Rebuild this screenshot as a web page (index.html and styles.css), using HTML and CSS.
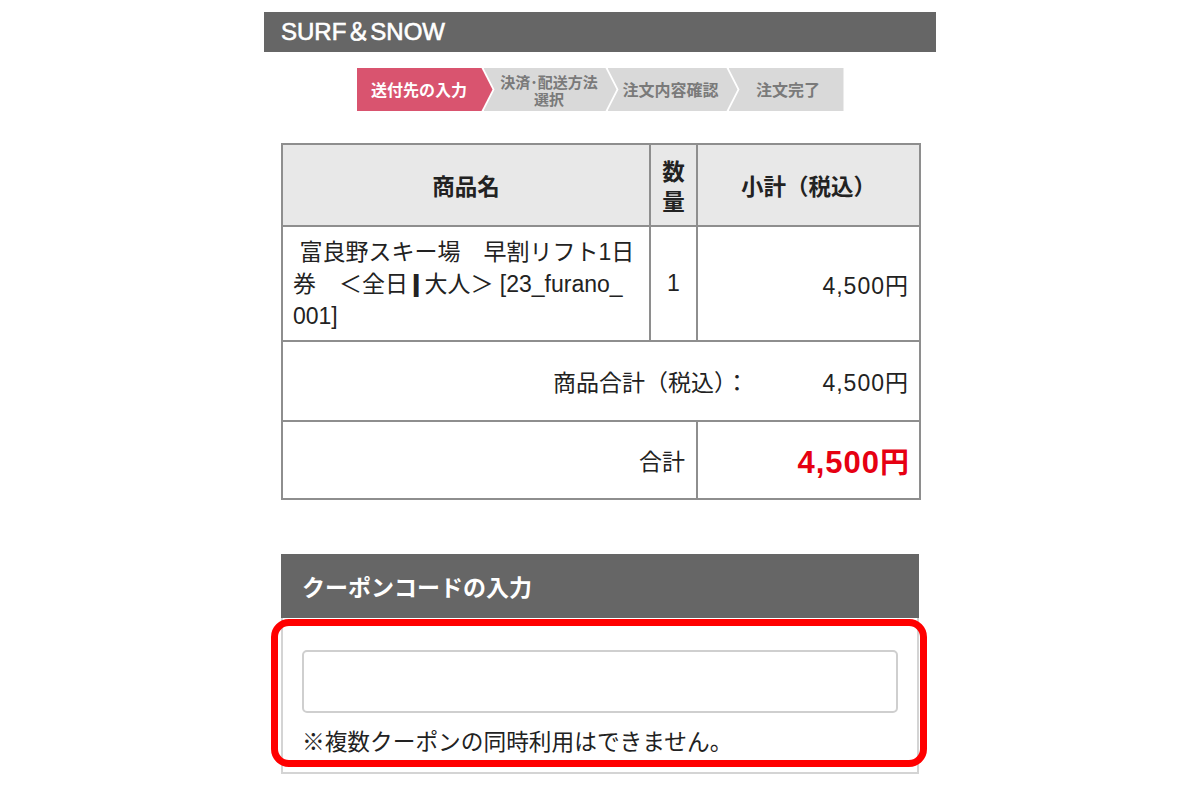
FILE: index.html
```html
<!DOCTYPE html>
<html lang="ja">
<head>
<meta charset="utf-8">
<title>SURF&SNOW</title>
<link rel="stylesheet" href="styles.css">
</head>
<body>
<div class="page">
  <header class="site-header">SURF＆SNOW</header>
  <ol class="steps">
    <li class="step step-1 active"><span>送付先の入力</span></li>
    <li class="step step-2"><span>決済･配送方法<br>選択</span></li>
    <li class="step step-3"><span>注文内容確認</span></li>
    <li class="step step-4"><span>注文完了</span></li>
  </ol>
  <div class="content">
    <table class="cart">
      <colgroup>
        <col class="c-name">
        <col class="c-qty">
        <col class="c-sub">
      </colgroup>
      <tr class="r-head">
        <th>商品名</th>
        <th class="qty-head">数<br>量</th>
        <th>小計（税込）</th>
      </tr>
      <tr class="r-item">
        <td class="name">&nbsp;富良野スキー場　早割リフト1日券　＜全日<span class="bar">|</span>大人＞ [23_furano_<wbr>001]</td>
        <td class="qty">1</td>
        <td class="price"><span class="num">4,500</span>円</td>
      </tr>
      <tr class="r-sum">
        <td colspan="3" class="sum"><span class="sum-label">商品合計（税込）：</span><span class="num">4,500</span>円</td>
      </tr>
      <tr class="r-total">
        <td colspan="2" class="total-label">合計</td>
        <td class="total-val"><span class="num">4,500</span>円</td>
      </tr>
    </table>

    <section class="coupon">
      <h2 class="coupon-title">クーポンコードの入力</h2>
      <div class="coupon-body">
        <input class="coupon-input" type="text">
        <p class="coupon-note">※複数クーポンの同時利用はできません。</p>
      </div>
      <div class="highlight"></div>
    </section>
  </div>
</div>
</body>
</html>
```

FILE: styles.css
```css
* { box-sizing: border-box; }
html, body { margin: 0; padding: 0; background: #fff; }
body {
  font-family: "Liberation Sans", "Noto Sans CJK JP", sans-serif;
  color: #222;
}
.page {
  width: 672px;
  margin: 0 auto;
  padding-top: 12px;
}
.site-header {
  height: 40px;
  background: #666;
  color: #fff;
  font-size: 24px;
  line-height: 40px;
  padding-left: 17px;
  -webkit-text-stroke: 0.6px #fff;
}
.steps {
  list-style: none;
  margin: 16px 0 0;
  padding: 0;
  display: flex;
  justify-content: center;
  height: 43px;
}
.step {
  height: 43px;
  background: #d9d9d9;
  color: #7a7a7a;
  font-family: "Noto Sans CJK JP", sans-serif;
  font-size: 16px;
  font-weight: 700;
  line-height: 17px;
  display: flex;
  align-items: center;
  justify-content: center;
  text-align: center;
  margin-left: -9px;
  clip-path: polygon(0 0, calc(100% - 11px) 0, 100% 50%, calc(100% - 11px) 100%, 0 100%, 11px 50%);
}
.step span { display: block; }
.step-1 {
  width: 136px;
  margin-left: 0;
  padding-right: 11px;
  background: #d9546f;
  color: #fff;
  clip-path: polygon(0 0, calc(100% - 11px) 0, 100% 50%, calc(100% - 11px) 100%, 0 100%);
}
.step-2 { width: 133px; font-size: 15px; padding-left: 2px; padding-right: 4px; }
.step-3 { width: 130px; padding-left: 0; padding-right: 4px; }
.step-4 {
  width: 115px;
  padding-left: 4px;
  clip-path: polygon(0 0, 100% 0, 100% 100%, 0 100%, 11px 50%);
}
.content { padding: 32px 17px 0; }
.cart {
  width: 638px;
  border-collapse: collapse;
  table-layout: fixed;
  font-size: 23px;
}
.c-name { width: 368px; }
.c-qty { width: 47px; }
.c-sub { width: 223px; }
.cart th, .cart td {
  border: 2px solid #8e8e8e;
  padding: 0 11px;
  vertical-align: middle;
}
.cart th {
  background: #e8e8e8;
  font-family: "Noto Sans CJK JP", sans-serif;
  font-weight: 700;
  font-size: 22.5px;
  text-align: center;
}
.r-head { height: 82px; }
.qty-head { line-height: 30px; padding: 0 !important; }
.r-item { height: 115px; }
.name {
  font-size: 23px;
  line-height: 32px;
  padding-left: 10px !important;
  padding-right: 10px !important;
}
.bar { font-weight: 900; margin: 0 5px; display: inline-block; transform: scaleX(1.6); }
.qty { text-align: center; padding: 0 !important; font-size: 23px; }
.num { font-size: 23px; letter-spacing: 1px; }
.price { text-align: right; font-size: 23px; }
.r-sum { height: 80px; }
.sum { text-align: right; font-size: 23px; }
.sum-label { margin-right: 74px; }
.r-total { height: 78px; }
.total-label { text-align: right; font-size: 23px; }
.total-val {
  text-align: right;
  color: #e60012;
  font-weight: 700;
  font-size: 29px;
  padding-right: 10px !important;
}
.total-val .num { font-size: 31px; letter-spacing: 1px; }
.coupon {
  position: relative;
  margin-top: 54px;
  border: 2px solid #d4d4d4;
  border-top: 0;
}
.coupon-title {
  margin: 0 -2px;
  height: 64px;
  background: #666;
  color: #fff;
  font-family: "Noto Sans CJK JP", sans-serif;
  font-size: 23px;
  font-weight: 700;
  line-height: 64px;
  padding-left: 21px;
}
.coupon-body {
  padding: 32px 19px 16px;
}
.coupon-input {
  display: block;
  width: 596px;
  height: 63px;
  border: 2px solid #cfcfcf;
  border-radius: 5px;
  background: #fff;
  margin: 0;
}
.coupon-note {
  margin: 13px 0 0;
  font-family: "Noto Sans CJK JP", sans-serif;
  font-size: 22.7px;
  line-height: 30px;
  color: #222;
}
.highlight {
  position: absolute;
  left: -12px;
  top: 65px;
  width: 656px;
  height: 148px;
  border: 7px solid #ff0000;
  border-radius: 18px;
  pointer-events: none;
}
```
